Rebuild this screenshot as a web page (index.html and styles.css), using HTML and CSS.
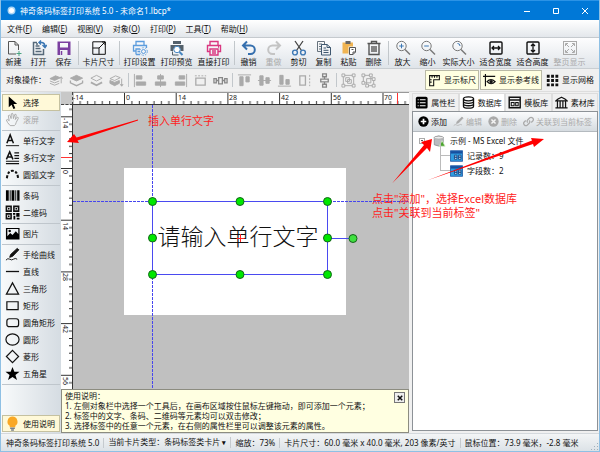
FILE: index.html
```html
<!DOCTYPE html>
<html lang="zh-CN">
<head>
<meta charset="utf-8">
<title>神奇条码标签打印系统 5.0</title>
<link rel="stylesheet" href="styles.css">
</head>
<body>
<svg class="defs" aria-hidden="true">
  <symbol id="new" viewBox="0 0 16 16"><path stroke="#555" d="M10 14H2.500V1.500H9L12.500 5V10M9 1.500V5H12.500"/><path d="M13 11v5M10.500 13.500h5" stroke="#4aa382"/></symbol>
  <symbol id="open" viewBox="0 0 16 16"><path d="M6 2.500H2.500V14.500H12.500V9" stroke="#56697a" stroke-width="1.500"/><path d="M4.500 6h4M4.500 8.500h5M4.500 11.500h6M5 4h2" stroke="#56697a" stroke-width="1.500"/><path d="M8 2.500H11Q14 3 14 7M11.500 5L14 7.500 15.800 5M10 .5L8 2.500 10 4.500" stroke="#3d78b4" stroke-width="1.500"/></symbol>
  <symbol id="save" viewBox="0 0 16 16"><path fill="#7b3fa0" stroke="none" fill-rule="evenodd" d="M1.500 1.500h13v13.500h-13zM4 3v4.500h8V3zM4 10v5h7.500v-5z"/><path d="M5.500 11v4" stroke="#7b3fa0" stroke-width="1.500"/></symbol>
  <symbol id="size" viewBox="0 0 16 16"><path d="M1.800 1.800h12.500v12.500H1.800zM1.800 8H8v6.300M8 8L14 2M11 2h3v3"/></symbol>
  <symbol id="setup" viewBox="0 0 16 16"><path stroke="#5d9ddd" stroke-width="1.300" d="M4 5V1.500h8V5M4 11H1.500V5.500h13V8M4 14.500V9h4M4 14.500h4M5.500 11.500H8"/><circle cx="11.500" cy="11.500" r="2" stroke="#5d9ddd"/><circle cx="11.500" cy="11.500" r="3.800" stroke="#5d9ddd" stroke-dasharray="1.500 1.200"/></symbol>
  <symbol id="preview" viewBox="0 0 16 16"><path fill="#53606b" stroke="none" d="M4 1h8v3H4zM1.500 5h13v6h-3L11 8H5l-1 3H1.500z"/><circle cx="8" cy="9.500" r="3.200" fill="#fff" stroke="#4787c2"/><path stroke="#4787c2" stroke-width="2" d="M10.500 12l3 3"/><path d="M3.500 11.500v3.500h6" stroke="#53606b"/></symbol>
  <symbol id="print" viewBox="0 0 16 16"><path stroke="#da3780" stroke-width="1.400" d="M4 5V1.500h8V5M4 11.500H1.500v-6h13v6H12M4 9h8v6H4zM6 11h4M6 13h4M12 7h1"/></symbol>
  <symbol id="undo" viewBox="0 0 16 16"><path stroke="#356fae" stroke-width="2" d="M6 1.500L2 5.500 6 9.500M2 5.500H9.500a4.300 4.300 0 0 1 0 8.600H7"/></symbol>
  <symbol id="redo" viewBox="0 0 16 16"><path stroke="#c4c4c4" stroke-width="2" d="M10 1.500l4 4-4 4M14 5.500H6.500a4.300 4.300 0 0 0 0 8.600H9"/></symbol>
  <symbol id="cut" viewBox="0 0 16 16"><path stroke="#444" d="M4 1l6.500 9.500M12 1L5.500 10.500" stroke-width="1.300"/><circle cx="4" cy="12.500" r="2.400" stroke="#3d78b4" stroke-width="1.400"/><circle cx="12" cy="12.500" r="2.400" stroke="#3d78b4" stroke-width="1.400"/></symbol>
  <symbol id="copy" viewBox="0 0 16 16"><path stroke="#66727d" d="M5 11.500H1.500v-10h7V4M3 4h3M3 6.500h2M3 9h2"/><path stroke="#3f5870" d="M5.500 4.500h5.500l3.500 3v7.500h-9zM11 4.500v3h3.500M7.500 8H10M7.500 10.300h5M7.500 12.500h5"/></symbol>
  <symbol id="paste" viewBox="0 0 16 16"><path fill="#f0b452" stroke="none" d="M1.500 2.500h10.500v4H7.500v7h-6z"/><path fill="#666" stroke="none" d="M4.500 1h5v3h-5z"/><path fill="#fff" stroke="#555" d="M8.500 7.500h6V12L12 14.500H8.500zM12 14.500V12h2.500M10.500 9.500h2"/></symbol>
  <symbol id="trash" viewBox="0 0 16 16"><path stroke="#555" stroke-width="1.400" d="M1.500 3.500h13M5.500 3.500v-2h5v2M3 3.500v11h10v-11M6 6v6M8 6v6M10 6v6"/></symbol>
  <symbol id="zoomin" viewBox="0 0 16 16"><circle cx="6.500" cy="6" r="4.700" stroke="#777"/><path stroke="#3d78b4" d="M4.200 6h4.600M6.500 3.700v4.600"/><path stroke="#777" stroke-width="1.400" d="M10 9.500l5 5"/></symbol>
  <symbol id="zoomout" viewBox="0 0 16 16"><circle cx="6.500" cy="6" r="4.700" stroke="#777"/><path stroke="#3d78b4" d="M4.200 6h4.600"/><path stroke="#777" stroke-width="1.400" d="M10 9.500l5 5"/></symbol>
  <symbol id="actual" viewBox="0 0 16 16"><circle cx="6.500" cy="6" r="4.700" stroke="#777"/><path stroke="#3d78b4" d="M6.500 3.500Q9 3.500 9 6"/><path stroke="#777" stroke-width="1.400" d="M10 9.500l5 5"/></symbol>
  <symbol id="fitw" viewBox="0 0 16 16"><rect x="2" y="2" width="12" height="12" rx="1" stroke-width="1.400"/><path stroke-width="1.300" d="M4 8h8M6 6L4 8l2 2M10 6l2 2-2 2"/></symbol>
  <symbol id="fith" viewBox="0 0 16 16"><rect x="2" y="2" width="12" height="12" rx="1" stroke-width="1.400"/><path stroke-width="1.300" d="M8 4v8M6 6l2-2 2 2M6 10l2 2 2-2"/></symbol>
  <symbol id="fitp" viewBox="0 0 16 16"><rect x="1.500" y="1.500" width="13" height="13"/><path d="M3.500 6V3.500H6M10 3.500h2.500V6M12.500 10v2.500H10M6 12.500H3.500V10M4 4l3 3M12 4L9 7M4 12l3-3M12 12L9 9"/></symbol>
  <symbol id="front1" viewBox="0 0 16 16"><path fill="currentColor" d="M1 6l6-3 5 2-6 3z"/><path d="M1 8.500l5 2 5-2M1 11l5 2 5-2M13 11V4M11.500 6L13 4l1.500 2"/></symbol>
  <symbol id="front2" viewBox="0 0 16 16"><path fill="currentColor" d="M1.500 5.500L8 2.500l6.500 3L8 8.500z"/><path stroke-width="1.400" d="M1.500 8v2.500L8 13.500l6.500-3V8"/></symbol>
  <symbol id="back1" viewBox="0 0 16 16"><path d="M2 5.500l6-3 6 3-6 3z"/><path stroke-width="1.800" d="M2 10l6 3 6-3"/></symbol>
  <symbol id="back2" viewBox="0 0 16 16"><path d="M1 6l6-3 5 2-6 3z"/><path fill="currentColor" d="M1 8l5 2 5-2v3l-5 2.500L1 11zM13.500 6v8M12 12l1.500 2 1.500-2"/></symbol>
  <symbol id="al" viewBox="0 0 16 16"><path d="M1.500 1v14"/><path fill="currentColor" d="M3.500 3h6v3.500h-6zM3.500 9.500h10V13h-10z"/></symbol>
  <symbol id="ac" viewBox="0 0 16 16"><path d="M8 1v14"/><path fill="currentColor" d="M5 3h6v3.500H5zM2.500 9.500h11V13h-11z"/></symbol>
  <symbol id="ar" viewBox="0 0 16 16"><path d="M14.500 1v14"/><path fill="currentColor" d="M6.500 3h6v3.500h-6zM2.500 9.500h10V13h-10z"/></symbol>
  <symbol id="at" viewBox="0 0 16 16"><path d="M1 2h14"/><path fill="currentColor" d="M3 4h3.500v9.500H3zM9.500 4H13v5.500H9.500z"/></symbol>
  <symbol id="am" viewBox="0 0 16 16"><path d="M1 8h14"/><path fill="currentColor" d="M3 3h3.500v10H3zM9.500 5H13v6H9.500z"/></symbol>
  <symbol id="ab" viewBox="0 0 16 16"><path d="M1 14h14"/><path fill="currentColor" d="M3 2.500h3.500V12H3zM9.500 7H13v5H9.500z"/></symbol>
  <symbol id="sw" viewBox="0 0 16 16"><path stroke-dasharray="2 1.500" d="M2 3h12"/><path stroke-width="1.400" d="M3 5.500h10v7.500H3z"/></symbol>
  <symbol id="sh" viewBox="0 0 16 16"><path stroke-dasharray="2 1.500" d="M13.500 2v12"/><path stroke-width="1.400" d="M3 3h6v10H3z"/></symbol>
  <symbol id="dh" viewBox="0 0 16 16"><path stroke="#888" stroke-width="1.400" d="M1 6h2.500v4.500H1zM12.500 6H15v4.500h-2.500zM6 5h4v6.500H6zM3.500 8H6M10 8h2.500"/></symbol>
  <symbol id="dv" viewBox="0 0 16 16"><path stroke="#888" stroke-width="1.400" d="M6 1h4v3H6zM6 12h4v3H6zM4 6.500h8v3H4zM8 4v2.500M8 9.500V12"/></symbol>
  <symbol id="grp" viewBox="0 0 16 16"><path d="M2.500 2.500h11v11h-11z"/><path fill="#f0f0f0" d="M1 1h3v3H1zM12 1h3v3h-3zM1 12h3v3H1zM12 12h3v3h-3zM5 5h4v4H5zM7 7h4v4H7z"/></symbol>
  <symbol id="ugrp" viewBox="0 0 16 16"><path d="M2.500 2.500h8v8h-8zM6 6h7.500v7.500H6z"/><path fill="#f0f0f0" d="M1 1h3v3H1zM9 1h3v3H9zM1 9h3v3H1zM12 12h3v3h-3zM12 5h3v3h-3zM5 12h3v3H5z"/></symbol>
  <symbol id="rul" viewBox="0 0 16 16"><path stroke-width="1.300" d="M2 2h12v5H7v7.500H2zM5 2v2.500M8 2v2.500M11 2v2.500M2 7h2.500M2 10h2.500"/></symbol>
  <symbol id="guide" viewBox="0 0 16 16"><path stroke-width="1.400" d="M0 3h15M3 0v15"/><path stroke-width="1.400" d="M5 9.500q4.500-5 10 0-5 5-10 0z"/><circle cx="10" cy="9.500" r="1.600" fill="currentColor"/></symbol>
  <symbol id="grid" viewBox="0 0 16 16"><path fill="currentColor" stroke="none" d="M1 1h3.500v3.500H1zM6.300 1h3.500v3.500H6.300zM11.600 1h3.500v3.500h-3.500zM1 6.300h3.500v3.500H1zM6.300 6.300h3.500v3.500H6.300zM11.600 6.300h3.500v3.500h-3.500zM1 11.600h3.500v3.500H1zM6.300 11.600h3.500v3.500H6.300zM11.600 11.600h3.500v3.500h-3.500z"/></symbol>
  <symbol id="arrow" viewBox="0 0 16 16"><path fill="#000" stroke="none" d="M4 1.500v11.500l3-2.500 2 4.500 2-1-2-4.300h4z"/></symbol>
  <symbol id="hand" viewBox="0 0 16 16"><path d="M5.500 14.500Q2 11 1.500 8.500q1-1.500 3 .8L3.500 4q1-1.500 2 0L6.500 7 6.700 2q1-1.300 1.800 0L9 7l1.500-4.500q1.500-.6 1.500 1L11 8l2-2.500q1.500 0 1.200 1.300L12 11q-.5 2.500-2 3.500z"/></symbol>
  <symbol id="a1" viewBox="0 0 16 16"><path stroke-width="1.600" d="M2 11L5.500 2 9 11M3.200 8h4.600"/><path d="M1 13.500h14"/></symbol>
  <symbol id="a2" viewBox="0 0 16 16"><path stroke-width="1.600" d="M1.500 10L5 2l3.500 8M2.700 7.500h4.600"/><path stroke-width="1.300" d="M10 3h5M10 6h5M10 9h5M1 12h14M1 14.500h14"/></symbol>
  <symbol id="arc" viewBox="0 0 16 16"><path stroke-width="2.200" stroke-dasharray="2.800 1.800" d="M2 12Q3 4 8 4t6 8"/></symbol>
  <symbol id="bar" viewBox="0 0 16 16"><path fill="#000" stroke="none" d="M1 2.500h3v11H1zM5 2.500h1v11H5zM7 2.500h3v11H7zM11 2.500h1v11h-1zM13 2.500h2.500v11H13z"/></symbol>
  <symbol id="qr" viewBox="0 0 16 16"><path stroke-width="1.700" d="M1.500 1.500h5v5h-5zM9.500 1.500h5v5h-5zM1.500 9.500h5v5h-5z"/><path fill="#000" stroke="none" d="M3.200 3.200h1.600v1.600H3.200zM11.200 3.200h1.600v1.600h-1.600zM3.200 11.200h1.600v1.600H3.200zM8.500 8.500h2.500v2H8.500zM12 8.500h3.500v4H12zM9 11.500h2v4H9zM12.500 13.500h3v2h-3z"/></symbol>
  <symbol id="pic" viewBox="0 0 16 16"><path fill="#000" stroke="none" fill-rule="evenodd" d="M1 2h14.500v12.500H1zM2.500 11l3-3.500 2.500 2 3.500-4 2.700 3V3.300H2.500z"/><circle cx="5" cy="5.300" r="1.300" fill="#000" stroke="none"/></symbol>
  <symbol id="pen" viewBox="0 0 16 16"><path fill="currentColor" d="M5 11l1-3 7-6.500L14.800 3 8 10z"/><path d="M1 14q2-2.500 4-1t4 0 4 0"/></symbol>
  <symbol id="line" viewBox="0 0 16 16"><path stroke-width="1.400" d="M1 8h14"/></symbol>
  <symbol id="tri" viewBox="0 0 16 16"><path stroke-width="1.300" d="M8 2l6.500 12h-13z"/></symbol>
  <symbol id="rect" viewBox="0 0 16 16"><path stroke-width="1.300" d="M2 4h12v8.500H2z"/></symbol>
  <symbol id="rrect" viewBox="0 0 16 16"><rect stroke-width="1.300" x="2" y="4" width="12.500" height="8.500" rx="2.500"/></symbol>
  <symbol id="circ" viewBox="0 0 16 16"><ellipse stroke-width="1.300" cx="8" cy="8" rx="7" ry="6"/></symbol>
  <symbol id="dia" viewBox="0 0 16 16"><path stroke-width="1.300" d="M8 1.500L14.500 8 8 14.500 1.500 8z"/></symbol>
  <symbol id="star" viewBox="0 0 16 16"><path fill="#000" stroke="none" d="M8 1l2 5h5.500l-4.400 3.500 1.700 5.500L8 11.800 3.200 15l1.700-5.500L.5 6H6z"/></symbol>
  <symbol id="bulb" viewBox="0 0 16 16"><path fill="#f9a825" stroke="none" d="M8 .5a5.500 5.500 0 0 1 3 10V12H5v-1.500a5.500 5.500 0 0 1 3-10z"/><path stroke="#77808a" stroke-width="1.500" d="M5.500 13h5M6.500 15h3"/></symbol>
  <symbol id="prop" viewBox="0 0 16 16"><rect x="1" y="1" width="14.500" height="14.500" rx="2" fill="#000" stroke="none"/><path stroke="#fff" stroke-width="1.300" d="M6 4.500h7M6 8.200h7M6 12h7M3.300 4.500h1.200M3.300 8.200h1.200M3.300 12h1.200"/></symbol>
  <symbol id="db" viewBox="0 0 16 16"><g stroke-width="1.600"><ellipse cx="8" cy="3.500" rx="6.200" ry="2.500"/><path d="M1.800 3.500v9q0 2.500 6.200 2.500t6.200-2.500v-9M1.800 6.500Q2 9 8 9t6.200-2.500M1.800 9.500Q2 12 8 12t6.200-2.500"/></g></symbol>
  <symbol id="tpl" viewBox="0 0 16 16"><path stroke-width="1.800" d="M1.500 1.500h13.500v13H1.500zM1.500 5H15"/><path stroke-width="1.300" d="M4 8h3.500v4H4zM9.500 8h3v4h-3z"/></symbol>
  <symbol id="lib" viewBox="0 0 16 16"><path stroke-width="1.500" d="M1 6Q3 3.500 8 1.500 13 3.500 15 6zM3 6v8M6.300 6v8M9.700 6v8M13 6v8M.5 14.500h15"/></symbol>
  <symbol id="plus" viewBox="0 0 16 16"><circle cx="8" cy="8" r="7.500" fill="#000" stroke="none"/><path stroke="#fff" stroke-width="2.500" d="M8 4v8M4 8h8"/></symbol>
  <symbol id="del" viewBox="0 0 16 16"><circle cx="8" cy="8" r="7.500" fill="#aaa" stroke="none"/><path stroke="#f4f4f4" stroke-width="2.200" d="M5 5l6 6M11 5l-6 6"/></symbol>
  <symbol id="link" viewBox="0 0 16 16"><path stroke-width="1.800" d="M7 9.500Q5 7.500 7 5.500l3-3q2-1.500 4 .5t.5 4L12 9.500M9 6.500q2 2 0 4l-3 3q-2 1.500-4-.5t-.5-4L4 6.500"/></symbol>
  <symbol id="xls" viewBox="0 0 16 16"><path fill="#b9bcc0" stroke="#85898d" d="M1 3q6-3.500 12 0v10q-6 3.500-12 0z"/><ellipse cx="7" cy="3.500" rx="6" ry="2" fill="#eee" stroke="#999"/><path fill="#4aa32d" stroke="#d9edcd" d="M11.500 7.500l4 7.500h-8z"/></symbol>
  <symbol id="tab" viewBox="0 0 16 14"><path fill="#2f9de0" stroke="#1c4f9c" d="M.5.5h15v13H.5z"/><path fill="#174f9f" stroke="none" d="M1 1h14v3H1z"/><path stroke="#123c7c" fill="#d8f1fb" d="M5.500 6h3v2.500h-3zM5.500 8.500h3V11h-3zM10.500 6h3v2.500h-3zM10.500 8.500h3V11h-3z"/></symbol>
</svg>

<div class="window">
  <header class="titlebar">
    <svg class="logo" viewBox="0 0 16 16"><circle cx="8" cy="8" r="7" fill="#a9d5f5"/><circle cx="8" cy="8" r="4.500" fill="#fff"/></svg>
    <h1>神奇条码标签打印系统 5.0 - 未命名1.lbcp*</h1>
    <div class="winctl">
      <button aria-label="最小化"><svg viewBox="0 0 8 8"><path d="M1 4.500h6"/></svg></button>
      <button aria-label="最大化"><svg viewBox="0 0 8 8"><path d="M1.500 1.500h5v5h-5z"/></svg></button>
      <button aria-label="关闭"><svg viewBox="0 0 8 8"><path d="M1 1l6 6M7 1L1 7"/></svg></button>
    </div>
  </header>

  <nav class="menubar">
    <button>文件(<u>F</u>)</button><button>编辑(<u>E</u>)</button><button>视图(<u>V</u>)</button><button>对象(<u>O</u>)</button><button>打印(<u>P</u>)</button><button>工具(<u>T</u>)</button><button>帮助(<u>H</u>)</button>
  </nav>

  <div class="toolbar">
    <button><svg><use href="#new"/></svg>新建</button>
    <button><svg><use href="#open"/></svg>打开</button>
    <button><svg><use href="#save"/></svg>保存</button>
    <i class="sep"></i>
    <button class="wide"><svg><use href="#size"/></svg>卡片尺寸</button>
    <i class="sep"></i>
    <button class="wide"><svg><use href="#setup"/></svg>打印设置</button>
    <button class="wide"><svg><use href="#preview"/></svg>打印预览</button>
    <button class="wide"><svg><use href="#print"/></svg>直接打印</button>
    <i class="sep"></i>
    <button><svg><use href="#undo"/></svg>撤销</button>
    <button disabled><svg><use href="#redo"/></svg>重做</button>
    <button><svg><use href="#cut"/></svg>剪切</button>
    <button><svg><use href="#copy"/></svg>复制</button>
    <button><svg><use href="#paste"/></svg>粘贴</button>
    <button><svg><use href="#trash"/></svg>删除</button>
    <i class="sep"></i>
    <button><svg><use href="#zoomin"/></svg>放大</button>
    <button><svg><use href="#zoomout"/></svg>缩小</button>
    <button class="wide"><svg><use href="#actual"/></svg>实际大小</button>
    <button class="wide"><svg><use href="#fitw"/></svg>适合宽度</button>
    <button class="wide"><svg><use href="#fith"/></svg>适合高度</button>
    <button class="wide" disabled><svg><use href="#fitp"/></svg>整页显示</button>
  </div>

  <div class="objectbar">
    <span class="caption">对象操作：</span>
    <button disabled aria-label="上移一层"><svg><use href="#front1"/></svg></button>
    <button disabled aria-label="置于顶层"><svg><use href="#front2"/></svg></button>
    <button disabled aria-label="置于底层"><svg><use href="#back1"/></svg></button>
    <button disabled aria-label="下移一层"><svg><use href="#back2"/></svg></button>
    <i class="sep"></i>
    <button disabled aria-label="左对齐"><svg><use href="#al"/></svg></button>
    <button disabled aria-label="水平居中"><svg><use href="#ac"/></svg></button>
    <button disabled aria-label="右对齐"><svg><use href="#ar"/></svg></button>
    <button disabled aria-label="等宽"><svg><use href="#sw"/></svg></button>
    <button disabled aria-label="水平分布"><svg><use href="#dh"/></svg></button>
    <i class="sep"></i>
    <button disabled aria-label="顶对齐"><svg><use href="#at"/></svg></button>
    <button disabled aria-label="垂直居中"><svg><use href="#am"/></svg></button>
    <button disabled aria-label="底对齐"><svg><use href="#ab"/></svg></button>
    <button disabled aria-label="等高"><svg><use href="#sh"/></svg></button>
    <button disabled aria-label="垂直分布"><svg><use href="#dv"/></svg></button>
    <i class="sep"></i>
    <button disabled aria-label="组合"><svg><use href="#grp"/></svg></button>
    <button disabled aria-label="取消组合"><svg><use href="#ugrp"/></svg></button>
    <div class="toggles">
      <button class="toggle on" aria-pressed="true"><svg><use href="#rul"/></svg>显示标尺</button>
      <button class="toggle on" aria-pressed="true"><svg><use href="#guide"/></svg>显示参考线</button>
      <button class="toggle" aria-pressed="false"><svg><use href="#grid"/></svg>显示网格</button>
    </div>
  </div>

  <main class="main">
    <aside class="tools">
      <button class="active"><svg><use href="#arrow"/></svg>选择</button>
      <button disabled><svg><use href="#hand"/></svg>滚屏</button>
      <hr>
      <button><svg><use href="#a1"/></svg>单行文字</button>
      <button><svg><use href="#a2"/></svg>多行文字</button>
      <button><svg><use href="#arc"/></svg>圆弧文字</button>
      <hr>
      <button><svg><use href="#bar"/></svg>条码</button>
      <button><svg><use href="#qr"/></svg>二维码</button>
      <hr>
      <button><svg><use href="#pic"/></svg>图片</button>
      <hr>
      <button><svg><use href="#pen"/></svg>手绘曲线</button>
      <button><svg><use href="#line"/></svg>直线</button>
      <button><svg><use href="#tri"/></svg>三角形</button>
      <button><svg><use href="#rect"/></svg>矩形</button>
      <button><svg><use href="#rrect"/></svg>圆角矩形</button>
      <button><svg><use href="#circ"/></svg>圆形</button>
      <button><svg><use href="#dia"/></svg>菱形</button>
      <button><svg><use href="#star"/></svg>五角星</button>
      <hr>
      <button class="usage active"><svg><use href="#bulb"/></svg>使用说明</button>
    </aside>

    <section class="editor">
      <div class="rulers">
        <div class="corner"></div>
        <svg class="ruler-x">
          <defs><pattern id="tx" patternUnits="userSpaceOnUse" x="51" y="0" width="51.7" height="13"><path stroke="#333" d="M.5 0v13M7.900 8v4M15.300 8v4M22.700 8v4M30 8v4M37.400 8v4M44.800 8v4"/></pattern></defs>
          <rect width="100%" height="13" fill="url(#tx)" stroke="none"/>
          <path d="M324.500 0v12" stroke="#f33"/>
          <text x="0" y="7">-14</text><text x="53" y="7">0</text><text x="105" y="7">14</text><text x="156" y="7">28</text><text x="208" y="7">42</text><text x="260" y="7">56</text><text x="311" y="7">70</text>
        </svg>
        <svg class="ruler-y">
          <defs><pattern id="ty" patternUnits="userSpaceOnUse" x="0" y="63" width="12" height="51.7"><path stroke="#333" d="M0 .5h12M8 7.900h4M8 15.300h4M8 22.700h4M8 30h4M8 37.400h4M8 44.800h4"/></pattern></defs>
          <rect width="12" height="100%" fill="url(#ty)" stroke="none"/>
          <path d="M0 52.500h11" stroke="#f33"/>
          <g transform="rotate(90)"><text x="13" y="-2">-14</text><text x="65" y="-2">0</text><text x="117" y="-2">14</text><text x="168" y="-2">28</text><text x="220" y="-2">42</text><text x="272" y="-2">56</text></g>
        </svg>
        <svg class="canvas">
          <rect x="51" y="63" width="222" height="147" fill="#fff" stroke="none"/>
          <g stroke="#4646ee" stroke-dasharray="3 1"><path d="M79.500 0v400"/><path d="M0 96.500h2000"/></g>
          <path d="M79.500 96.500h175v73h-175zM254.500 133.500h25" fill="none" stroke="#4a4af0"/>
          <text class="label-text" x="165" y="140">请输入单行文字</text>
          <path d="M167.500 129v8M163.500 133.500h8" stroke="#f22"/>
          <g fill="#00e800" stroke="#14641a"><circle cx="79.500" cy="96.500" r="4"/><circle cx="167" cy="96.500" r="4"/><circle cx="254.500" cy="96.500" r="4"/><circle cx="79.500" cy="133" r="4"/><circle cx="254.500" cy="133" r="4"/><circle cx="79.500" cy="169.500" r="4"/><circle cx="167" cy="169.500" r="4"/><circle cx="254.500" cy="169.500" r="4"/><circle cx="280" cy="133.500" r="4" fill="#40e040"/></g>
        </svg>
      </div>
      <div class="help">
        <div>
          <p>使用说明：</p>
          <p>1. 左侧对象栏中选择一个工具后，在画布区域按住鼠标左键拖动，即可添加一个元素；</p>
          <p>2. 标签中的文字、条码、二维码等元素均可以双击修改；</p>
          <p>3. 选择标签中的任意一个元素，在右侧的属性栏里可以调整该元素的属性。</p>
        </div>
        <button aria-label="关闭说明"><svg viewBox="0 0 8 8"><path d="M1 1l6 6M7 1L1 7"/></svg></button>
      </div>
    </section>

    <aside class="side">
      <div class="tabs" role="tablist">
        <button role="tab"><svg><use href="#prop"/></svg>属性栏</button>
        <button role="tab" aria-selected="true" class="current"><svg><use href="#db"/></svg>数据库</button>
        <button role="tab"><svg><use href="#tpl"/></svg>模板库</button>
        <button role="tab"><svg><use href="#lib"/></svg>素材库</button>
      </div>
      <div class="panel">
        <div class="paneltools">
          <button><svg><use href="#plus"/></svg>添加</button>
          <button disabled><svg><use href="#pen"/></svg>编辑</button>
          <button disabled><svg><use href="#del"/></svg>删除</button>
          <i class="sep"></i>
          <button disabled><svg><use href="#link"/></svg>关联到当前标签</button>
        </div>
        <ul class="tree">
          <li>
            <div class="node"><span class="expander"></span><svg><use href="#xls"/></svg>示例 - MS Excel 文件</div>
            <ul>
              <li class="node"><svg><use href="#tab"/></svg>记录数：9</li>
              <li class="node"><svg><use href="#tab"/></svg>字段数：2</li>
            </ul>
          </li>
        </ul>
      </div>
    </aside>

    <svg class="marks" aria-hidden="true">
      <g fill="red"><path d="M137 27.500L137 28.500 76.500 48.500 78 51 66 50 73 42 75.500 45.500z"/><path d="M391 91.500L423 53 420 50 431 47 429 60 426 56z"/><path d="M426 88.500L531 48.500 530 46 543 47 533 55 532 52z"/></g>
    </svg>
    <p class="note note-insert">插入单行文字</p>
    <p class="note note-link">点击"添加"，选择Excel数据库<br>点击"关联到当前标签"</p>
  </main>

  <footer class="status">
    <span>神奇条码标签打印系统 5.0</span>
    <span>当前卡片类型：条码标签类卡片 <b>▾</b></span>
    <span>缩放：73%</span>
    <span>卡片尺寸：60.0 毫米 x 40.0 毫米, 203 像素/英寸</span>
    <span>鼠标位置：73.9 毫米，-2.8 毫米</span>
    <i class="grip"></i>
  </footer>
</div>
</body>
</html>
```
FILE: styles.css
```css
* { box-sizing: border-box; }
body {
  margin: 0;
  font: 8px/10px "Noto Sans", "Noto Sans CJK SC", sans-serif;
  color: #111;
}
.defs { position: absolute; width: 0; height: 0; }
p, ul, h1 { margin: 0; padding: 0; list-style: none; }
button {
  margin: 0;
  padding: 0;
  border: 1px solid transparent;
  background: none;
  font: inherit;
  color: inherit;
  white-space: nowrap;
}
button:disabled { color: #aaa; }
svg { flex: none; fill: none; stroke: currentColor; }

.window {
  display: flex;
  flex-direction: column;
  height: 100vh;
  border: solid #8fc0e4;
  border-width: 0 1px 1px;
  background: #f0f0f0;
}

.titlebar {
  display: flex;
  align-items: center;
  gap: 4px;
  height: 20px;
  padding-left: 6px;
  border-top: 1px solid #2b93e6;
  background: #0078d7;
  color: #fff;
}
.logo { width: 9px; height: 9px; stroke: none; }
h1 { flex: 1; font-size: 8px; font-weight: 400; }
.winctl { display: flex; }
.winctl button { display: grid; place-items: center; width: 29px; height: 18px; }
.winctl svg { width: 8px; height: 8px; }

.menubar {
  display: flex;
  align-items: center;
  gap: 8px;
  height: 17px;
  padding-left: 5px;
  background: linear-gradient(#fff, #e3e7eb);
}
.toolbar {
  display: flex;
  align-items: stretch;
  height: 32px;
  border-top: 1px solid #c5cace;
  border-bottom: 1px solid #c9ced2;
  background: linear-gradient(#fdfdfe, #dfe4e9);
}
.toolbar button {
  display: flex;
  flex-direction: column;
  align-items: center;
  justify-content: center;
  gap: 1px;
  width: 25px;
}
.toolbar .wide { width: 37px; }
.toolbar svg { width: 16px; height: 16px; }
.sep { width: 4px; margin: 3px 0; background: linear-gradient(#c2c7cb, #c2c7cb) center / 1px 100% no-repeat; }

.objectbar { display: flex; height: 23px; padding: 1px 2px 1px 5px; border-bottom: 1px solid #ddd; }
.caption { width: 40px; align-self: center; }
.objectbar > button { display: grid; place-items: center; width: 20px; }
.objectbar > button svg { width: 15px; height: 15px; }
.toggles { display: flex; gap: 1px; margin-left: auto; }
.toggle { display: flex; align-items: center; gap: 3px; padding: 0 2px; }
.toggle.on { border-color: #b9b9a6; background: #ffffe1; }
.toggle svg { width: 13px; height: 13px; }

.main { position: relative; flex: 1; display: flex; min-height: 0; }

.tools {
  display: flex;
  flex-direction: column;
  flex: none;
  width: 60px;
  padding: 2px 1px 1px;
  background: linear-gradient(90deg, #f8fafb, #d5dce2);
}
.tools button { display: flex; align-items: center; gap: 3px; height: 17px; padding-left: 2px; }
.tools svg { width: 15px; height: 15px; }
.tools hr { width: 100%; height: 1px; margin: 2px 0 1px; border: 0; background: #bfc6cc; }
.tools .active { border-color: #c5c1a0; background: #fff9d8; }
.tools .usage { margin-top: auto; }

.editor { flex: 1; display: flex; flex-direction: column; min-width: 0; }
.rulers { flex: 1; display: grid; grid-template: 13px 1fr / 12px 1fr; min-height: 0; }
.rulers svg { display: block; width: 100%; height: 100%; min-height: 0; overflow: hidden; }
.corner { border: dashed #444; border-width: 0 1px 1px 0; background: #c8c8c8; }
.ruler-x, .ruler-y { background: #fff; }
.ruler-x { border-bottom: 1px solid #333; border-top: 1px solid #999; }
.ruler-y { border-right: 1px solid #333; }
.rulers text { font-size: 7px; fill: #222; stroke: none; }
.canvas { background: #c0c0c0; }
.canvas .label-text { font: 300 23px "Liberation Serif", "Noto Sans CJK SC", serif; text-anchor: middle; fill: #111; }

.help {
  display: flex;
  justify-content: space-between;
  align-items: flex-start;
  padding: 1px 3px;
  border: 1px solid #8c8c80;
  background: #ffffe1;
  white-space: nowrap;
}
.help button { display: grid; place-items: center; width: 11px; height: 11px; margin-top: 1px; border-color: #777; background: #eee; }
.help svg { width: 6px; height: 6px; stroke-width: 2; }

.side { flex: none; display: flex; flex-direction: column; width: 190px; padding: 1px 1px 2px 3px; }
.tabs { display: flex; height: 18px; }
.tabs button {
  flex: 1;
  display: flex;
  align-items: center;
  justify-content: center;
  gap: 3px;
  border-color: #ddd;
  border-bottom: 0;
}
.tabs .current { background: #fff; }
.tabs svg { width: 13px; height: 13px; }
.panel { flex: 1; border: 1px solid #8d9297; background: #fff; }
.paneltools { display: flex; height: 20px; padding: 0 2px; border-bottom: 1px solid #b4babf; background: linear-gradient(#fafbfc, #d5dbe0); }
.paneltools button { display: flex; align-items: center; gap: 2px; padding: 0 2px; }
.paneltools svg { width: 11px; height: 11px; }
.tree { padding: 1px 0 0 6px; }
.node { display: flex; align-items: center; gap: 4px; height: 15px; white-space: nowrap; }
.node svg { width: 13px; height: 12px; }
.node .expander { width: 6px; height: 6px; margin-right: 4px; border: 1px solid #aaa; background: linear-gradient(#555, #555) center / 2px 1px no-repeat; }
.tree ul { margin-left: 21px; }
.tree ul .node::before { content: ""; width: 9px; height: 15px; margin: -15px -4px 0 0; border: solid #bbb; border-width: 0 0 1px 1px; }

.marks { position: absolute; inset: 0; width: 100%; height: 100%; stroke: none; pointer-events: none; }
.note { position: absolute; font-size: 11px; line-height: 14px; color: #f22; white-space: nowrap; }
.note-insert { left: 147px; top: 22px; }
.note-link { left: 371px; top: 100px; }

.status {
  display: flex;
  align-items: center;
  height: 18px;
  padding-left: 1px;
  border-top: 1px solid #d4d9dd;
  background: linear-gradient(#f3f5f6, #dce2e7);
  white-space: nowrap;
}
.status span { padding: 0 4px; border-right: 1px solid #c5cace; }
.status span:nth-of-type(5) { border: 0; }
.status b { font-size: 7px; }
.grip { width: 8px; height: 8px; margin: auto 1px 1px auto; background: radial-gradient(#9fb0bc 1px, transparent 1px) 0 0 / 3px 3px; clip-path: polygon(100% 0, 100% 100%, 0 100%); }
```
